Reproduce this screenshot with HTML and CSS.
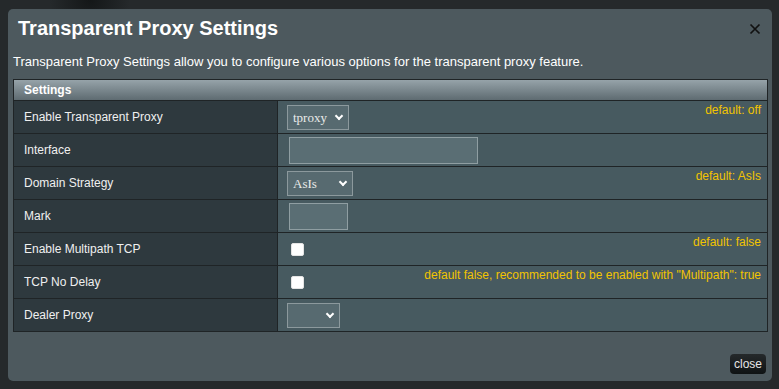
FILE: index.html
```html
<!DOCTYPE html>
<html>
<head>
<meta charset="utf-8">
<link rel="stylesheet" href="styles.css">
</head>
<body>
<div class="modal">
  <div class="modal-header">
    <h1 class="title">Transparent Proxy Settings</h1>
    <svg class="x-icon" width="12" height="12" viewBox="0 0 12 12"><path d="M1.5 1.5 L10.5 10.5 M10.5 1.5 L1.5 10.5" stroke="#111" stroke-width="1.7" fill="none"/></svg>
  </div>
  <p class="desc">Transparent Proxy Settings allow you to configure various options for the transparent proxy feature.</p>
  <div class="grid">
    <div class="head">Settings</div>

    <div class="label">Enable Transparent Proxy</div>
    <div class="value">
      <span class="sel"><select class="w62"><option>tproxy</option></select></span>
      <span class="note">default: off</span>
    </div>

    <div class="label">Interface</div>
    <div class="value"><input class="txt w189" type="text"></div>

    <div class="label">Domain Strategy</div>
    <div class="value">
      <span class="sel"><select class="w66"><option>AsIs</option></select></span>
      <span class="note">default: AsIs</span>
    </div>

    <div class="label">Mark</div>
    <div class="value"><input class="txt w59" type="text"></div>

    <div class="label">Enable Multipath TCP</div>
    <div class="value">
      <input class="chk" type="checkbox">
      <span class="note">default: false</span>
    </div>

    <div class="label">TCP No Delay</div>
    <div class="value">
      <input class="chk" type="checkbox">
      <span class="note">default false, recommended to be enabled with "Multipath": true</span>
    </div>

    <div class="label">Dealer Proxy</div>
    <div class="value"><span class="sel"><select class="w53"><option></option></select></span></div>
  </div>
  <div class="footer"><button class="close-btn">close</button></div>
</div>
</body>
</html>
```
FILE: styles.css
```css
html, body {
  margin: 0;
  padding: 0;
}
body {
  width: 779px;
  height: 389px;
  overflow: hidden;
  background: radial-gradient(circle at 90px 0px, #141718 0, #25292b 40px, #25292b 100%);
  background-color: #24282a;
  font-family: "Liberation Sans", Arial, sans-serif;
}
.modal {
  box-sizing: border-box;
  margin: 9px 0 0 8px;
  width: 764px;
  height: 372px;
  border-radius: 5px;
  background: #4d595e;
  display: flex;
  flex-direction: column;
  padding: 0 4px 7px 5px;
  color: #fff;
}
.modal-header {
  display: flex;
  align-items: center;
  justify-content: space-between;
  padding: 7px 0 0 5px;
}
.title {
  margin: 0;
  font-size: 20px;
  line-height: 24px;
  font-weight: bold;
  color: #fff;
}
.x-icon {
  margin-right: 7px;
  margin-top: 1px;
}
.desc {
  margin: 14px 0 0 0;
  font-size: 13px;
  line-height: 16px;
  color: #fff;
}
.grid {
  margin-top: 9px;
  width: 755px;
  box-sizing: border-box;
  display: grid;
  grid-template-columns: 263px 1fr;
  grid-template-rows: 20px repeat(7, 32px);
  gap: 1px;
  background: #1f2426;
  border: 1px solid #1f2426;
}
.head {
  grid-column: 1 / 3;
  background: linear-gradient(#96a3a9, #5e6b71);
  font-size: 12px;
  font-weight: bold;
  line-height: 20px;
  padding-left: 10px;
  color: #fff;
}
.label {
  background: #2e393e;
  font-size: 12px;
  color: #f0f0f0;
  padding-left: 10px;
  display: flex;
  align-items: center;
}
.value {
  background: #475a60;
  display: flex;
  align-items: center;
  justify-content: space-between;
  padding: 0 6px 0 9px;
}
.note {
  align-self: flex-start;
  margin-top: 2px;
  font-size: 12px;
  line-height: 14px;
  color: #f2c400;
}
.sel {
  position: relative;
  display: inline-block;
  height: 25px;
}
.sel::after {
  content: "";
  position: absolute;
  right: 7px;
  top: 8px;
  width: 4px;
  height: 4px;
  border-right: 2px solid #fff;
  border-bottom: 2px solid #fff;
  transform: rotate(45deg);
  pointer-events: none;
}
select {
  appearance: none;
  -webkit-appearance: none;
  box-sizing: border-box;
  height: 25px;
  margin: 0;
  padding: 0 0 0 5px;
  background: #576a70;
  border: 1px solid #8c999d;
  border-radius: 0;
  color: #eaeaea;
  font-family: "Liberation Serif", "Times New Roman", serif;
  font-size: 13px;
}
.w62 { width: 62px; }
.w66 { width: 66px; }
.w53 { width: 53px; }
.txt {
  box-sizing: border-box;
  height: 27px;
  margin: 0 0 0 2px;
  background: #5a6e74;
  border: 1px solid #8f9ea2;
  border-radius: 0;
  outline: none;
}
.w189 { width: 189px; }
.w59 { width: 59px; }
.chk {
  appearance: none;
  -webkit-appearance: none;
  box-sizing: border-box;
  width: 13px;
  height: 13px;
  margin: 0 0 0 4px;
  background: #fff;
  border: 1px solid #e4e4e4;
  border-radius: 2px;
}
.footer {
  margin-top: auto;
  display: flex;
  justify-content: flex-end;
}
.close-btn {
  box-sizing: border-box;
  width: 36px;
  height: 20px;
  margin-right: 2px;
  padding: 0;
  border: none;
  border-radius: 4px;
  background: linear-gradient(#25292b, #0f1314);
  color: #e6e6e6;
  font-family: "Liberation Sans", Arial, sans-serif;
  font-size: 12px;
}
```
